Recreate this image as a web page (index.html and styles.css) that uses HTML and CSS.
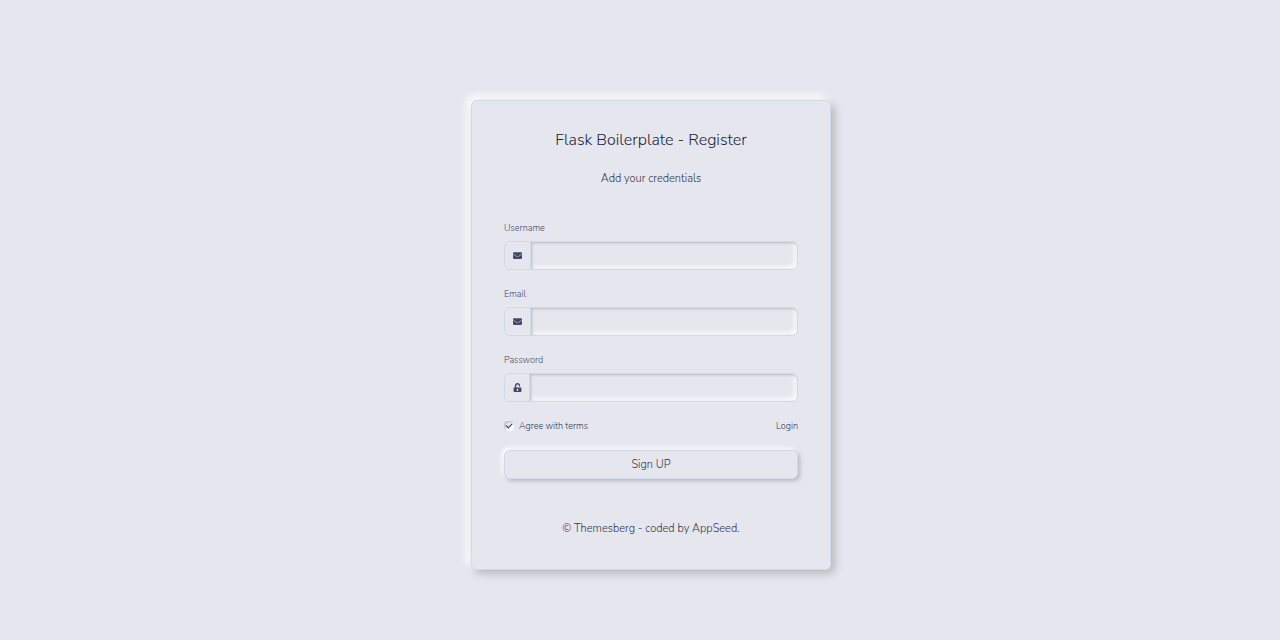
FILE: index.html
```html
<!DOCTYPE html>
<html lang="en">
<head>
<meta charset="utf-8">
<meta name="viewport" content="width=device-width, initial-scale=1">
<title>Flask Boilerplate - Register</title>
<link rel="stylesheet" href="styles.css">
</head>
<body>
<main class="page">
  <section class="card">
    <h1 class="title">Flask Boilerplate - Register</h1>
    <p class="subtitle">Add your credentials</p>
    <form class="form">
      <div class="group">
        <label class="label" for="username">Username</label>
        <div class="field">
          <span class="addon"><svg class="icon" viewBox="0 0 512 512" aria-hidden="true"><path d="M502 191c4-3 10 0 10 5v204c0 26-22 48-48 48H48c-26 0-48-22-48-48V196c0-5 6-8 10-5 22 17 52 40 154 114 21 15 57 47 92 47 35 0 72-32 92-47 102-74 132-97 154-114zM256 320c23 0 57-29 73-41 133-96 143-105 173-128 6-5 10-12 10-19v-20c0-26-22-48-48-48H48c-26 0-48 22-48 48v20c0 7 4 14 10 19 30 23 40 32 173 128 16 12 50 41 73 41z"/></svg></span>
          <input class="input" id="username" type="text">
        </div>
      </div>
      <div class="group">
        <label class="label" for="email">Email</label>
        <div class="field">
          <span class="addon"><svg class="icon" viewBox="0 0 512 512" aria-hidden="true"><path d="M502 191c4-3 10 0 10 5v204c0 26-22 48-48 48H48c-26 0-48-22-48-48V196c0-5 6-8 10-5 22 17 52 40 154 114 21 15 57 47 92 47 35 0 72-32 92-47 102-74 132-97 154-114zM256 320c23 0 57-29 73-41 133-96 143-105 173-128 6-5 10-12 10-19v-20c0-26-22-48-48-48H48c-26 0-48 22-48 48v20c0 7 4 14 10 19 30 23 40 32 173 128 16 12 50 41 73 41z"/></svg></span>
          <input class="input" id="email" type="email">
        </div>
      </div>
      <div class="group">
        <label class="label" for="password">Password</label>
        <div class="field">
          <span class="addon addon-lock"><svg class="icon" viewBox="0 0 448 512" aria-hidden="true"><path d="M400 256H152v-103c0-40 32-73 71-73 40 0 73 32 73 72v16c0 13 11 24 24 24h32c13 0 24-11 24-24v-16C376 68 307 0 223 0 139 0 72 70 72 154v102H48c-27 0-48 21-48 48v160c0 27 21 48 48 48h352c27 0 48-21 48-48V304c0-27-21-48-48-48zM264 408c0 22-18 40-40 40s-40-18-40-40v-48c0-22 18-40 40-40s40 18 40 40v48z"/></svg></span>
          <input class="input" id="password" type="password">
        </div>
      </div>
      <div class="options">
        <label class="terms"><input class="check" type="checkbox" checked>Agree with terms</label>
        <a class="login" href="#">Login</a>
      </div>
      <button class="submit" type="submit">Sign UP</button>
    </form>
    <p class="footer">© Themesberg - coded by AppSeed.</p>
  </section>
</main>
</body>
</html>
```
FILE: styles.css
```css
* {
  box-sizing: border-box;
}

body {
  margin: 0;
  background: #e6e7ee;
  color: #31344b;
  font-family: "Nunito Sans", Nunito, "Open Sans", sans-serif;
  font-size: 11px;
  font-weight: 300;
  line-height: 16px;
}

.page {
  display: flex;
  align-items: center;
  justify-content: center;
  min-height: 100vh;
  padding: 30px 0 0 22px;
}

.card {
  width: 100%;
  max-width: 360px;
  padding: 28px 32px 32px;
  border: 1px solid #d1d9e6;
  border-radius: 6px;
  box-shadow: 4px 4px 8px #b8b9be, -4px -4px 8px #ffffff;
}

.title {
  margin: 0 0 20px;
  color: #24263b;
  font-size: 16px;
  font-weight: 300;
  line-height: 22px;
  text-align: center;
}

.subtitle {
  margin: 0 0 33px;
  text-align: center;
}

.form {
  display: flex;
  flex-direction: column;
  gap: 16px;
}

.group {
  display: flex;
  flex-direction: column;
  gap: 5px;
}

.label {
  align-self: flex-start;
  color: #44476a;
  font-size: 9px;
}

.field {
  display: flex;
  height: 29px;
  border: 1px solid #d1d9e6;
  border-radius: 6px;
}

.addon {
  display: flex;
  align-items: center;
  justify-content: center;
  width: 25px;
}

.addon-lock {
  width: 24px;
}

.icon {
  width: 9px;
  height: 9px;
  fill: #44476a;
}

.input {
  flex: 1;
  min-width: 0;
  padding: 0 8px;
  border: 0;
  border-left: 1px solid #d1d9e6;
  border-radius: 0 5px 5px 0;
  outline: 0;
  background: transparent;
  box-shadow: inset 1px 1px 3px #b8b9be, inset -2px -2px 5px #ffffff;
  color: inherit;
  font: inherit;
}

.options {
  display: flex;
  align-items: center;
  justify-content: space-between;
  font-size: 9px;
}

.terms {
  display: flex;
  align-items: center;
  gap: 5px;
}

.check {
  display: grid;
  place-items: center;
  width: 10px;
  height: 10px;
  margin: 0;
  appearance: none;
  border-radius: 4px;
  box-shadow: inset 1px 1px 2px #b8b9be, inset -2px -2px 3px #ffffff;
}

.check:checked::before {
  content: "";
  width: 5px;
  height: 3px;
  margin-bottom: 2px;
  border: solid #31344b;
  border-width: 0 0 1px 1px;
  transform: rotate(-45deg);
}

.login {
  color: inherit;
  text-decoration: none;
}

.submit {
  height: 29px;
  padding: 0;
  border: 1px solid #d1d9e6;
  border-radius: 6px;
  background: #e6e7ee;
  box-shadow: 2px 2px 4px #b8b9be, -2px -2px 4px #ffffff;
  color: inherit;
  font: inherit;
}

.footer {
  margin: 42px 0 0;
  text-align: center;
}
```
